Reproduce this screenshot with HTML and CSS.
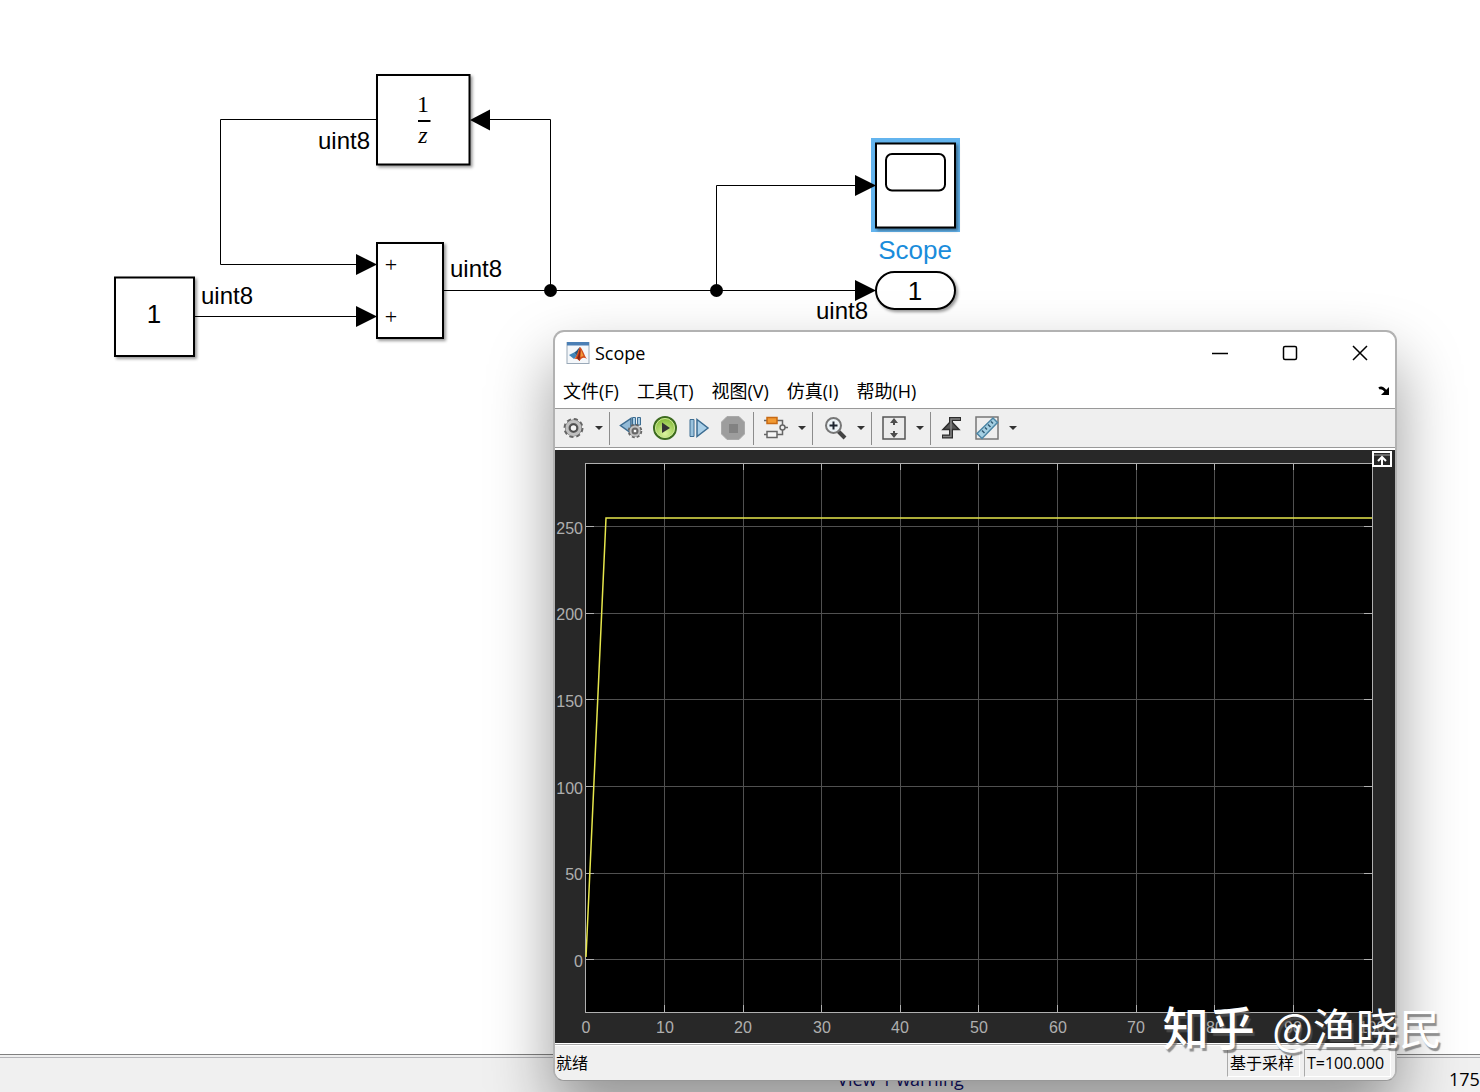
FILE: index.html
```html
<!DOCTYPE html>
<html lang="zh-CN">
<head>
    <meta charset="UTF-8">
    <meta name="viewport" content="width=device-width, initial-scale=1.0">
    <title>Scope</title>
    <link rel="stylesheet" href="styles.css">
</head>
<body>
    <main class="canvas">
        <svg class="diagram" width="1000" height="380" viewBox="0 0 1000 380">
            <defs>
                <filter id="blockShadow" x="-10%" y="-10%" width="130%" height="130%">
                    <feDropShadow dx="2" dy="2" stdDeviation="1.5" flood-color="#000" flood-opacity="0.4"/>
                </filter>
            </defs>

            <!-- signal lines -->
            <g class="wire">
                <path d="M376 119.500H220.500V264.500H358"/>
                <path d="M194 316.500H358"/>
                <path d="M444 290.500H858"/>
                <path d="M550.500 290V119.500H488"/>
                <path d="M716.500 290V185.500H858"/>
            </g>

            <!-- blocks -->
            <g class="block" filter="url(#blockShadow)">
                <rect x="115" y="277.500" width="79" height="78.500"/>
                <rect x="377" y="75" width="92.500" height="89.500"/>
                <rect x="377" y="243" width="66" height="95"/>
                <rect x="876" y="272" width="79" height="37" rx="18.500"/>
            </g>
            <rect class="selection" x="871" y="138" width="89" height="94"/>
            <rect class="block" x="876" y="143.500" width="79" height="84" filter="url(#blockShadow)"/>
            <rect class="block" x="886" y="154" width="59" height="36.500" rx="6"/>

            <g class="arrow">
                <path d="M356 254V275L377 264.500z"/>
                <path d="M356 306V327L377 316.500z"/>
                <path d="M490 109.500V130.500L470 120z"/>
                <path d="M855 175V196L876 185.500z"/>
                <path d="M855 280V301L876 290.500z"/>
                <circle cx="550.500" cy="290.500" r="6.500"/>
                <circle cx="716.500" cy="290.500" r="6.500"/>
            </g>

            <g class="type">
                <text x="318" y="149">uint8</text>
                <text x="201" y="304">uint8</text>
                <text x="450" y="277">uint8</text>
                <text x="816" y="319">uint8</text>
            </g>
            <g class="value">
                <text x="154" y="323">1</text>
                <text x="915" y="300">1</text>
            </g>
            <g class="math">
                <text x="423" y="112">1</text>
                <path d="M418 121H430.500"/>
                <text x="423" y="143" class="italic">z</text>
                <text x="391" y="272" class="port">+</text>
                <text x="391" y="324" class="port">+</text>
            </g>
            <text class="block-name" x="915" y="259">Scope</text>
        </svg>
    </main>

    <footer class="editor-status">
        <a class="warning" href="#">View 1 warning</a>
        <span class="zoom-level">175</span>
    </footer>

    <section class="window">
        <header class="titlebar">
            <svg class="logo" viewBox="0 0 24 24">
                <rect x="1" y="1.500" width="22" height="21" fill="#f4f7fa" stroke="#9aa9b8"/>
                <path d="M1 1H23V4.500H1z" fill="#4b7fb5"/>
                <path d="M3 14L8 11.500L11 14.500L8 18z" fill="#3f84b8"/>
                <path d="M8 11.500C11 10.500 12.500 6.500 14 6L11 14.500z" fill="#285a84"/>
                <path d="M14 6C16.500 7.500 18 14 21 18C18 16 16 16 13.500 20C12 18.500 10.500 17.500 8 18C11 16 12 9 14 6z" fill="#d4501e"/>
                <path d="M14 7C15 11 14 16 13.500 20L11 17C13 14 13 10 14 7z" fill="#8a2415"/>
                <path d="M15 9L17.500 15L14.500 16z" fill="#f49a3a"/>
            </svg>
            <h1>Scope</h1>
            <div class="caption-buttons">
                <button type="button" aria-label="Minimize"><svg viewBox="0 0 16 16"><path d="M0 8.500H16"/></svg></button>
                <button type="button" aria-label="Maximize"><svg viewBox="0 0 16 16"><rect x="1.500" y="1.500" width="13" height="13" rx="1.500"/></svg></button>
                <button type="button" aria-label="Close"><svg viewBox="0 0 16 16"><path d="M1 1L15 15M15 1L1 15"/></svg></button>
            </div>
        </header>

        <nav class="menubar">
            <button type="button">文件(F)</button>
            <button type="button">工具(T)</button>
            <button type="button">视图(V)</button>
            <button type="button">仿真(I)</button>
            <button type="button">帮助(H)</button>
            <button type="button" class="dock" aria-label="Dock">
                <svg viewBox="0 0 12 10"><path d="M1 2.500C4 0.500 6 3 8 5.500" fill="none" stroke="#000" stroke-width="2.500"/><path d="M11 1V9H3z"/></svg>
            </button>
        </nav>

        <div class="toolbar">
            <div class="group">
                <button type="button" aria-label="Configuration">
                    <svg viewBox="0 0 24 24">
                        <circle cx="12.500" cy="12" r="8.500" fill="none" stroke="#666" stroke-width="3" stroke-dasharray="3.900 2.780"/>
                        <circle cx="12.500" cy="12" r="6" fill="none" stroke="#666" stroke-width="5"/>
                        <circle cx="12.500" cy="12" r="6.500" fill="none" stroke="#c0c0c0" stroke-width="3"/>
                        <circle cx="12.500" cy="12" r="3.500" fill="#f4f4f4" stroke="#4a4a4a" stroke-width="1.500"/>
                    </svg>
                </button>
                <button type="button" class="drop" aria-label="Configuration options"></button>
            </div>
            <div class="group">
                <button type="button" aria-label="Step back options">
                    <svg viewBox="0 0 24 24">
                        <path d="M12 2.500V17L1.500 9.500z" fill="#93bad6" stroke="#3d6d92" stroke-width="1.500"/>
                        <path d="M13.500 1.500H16.500V9H13.500zM18.500 1.500H21.500V9H18.500z" fill="#a9cde5" stroke="#3d6d92"/>
                        <circle cx="16" cy="15" r="6" fill="none" stroke="#666" stroke-width="2.500" stroke-dasharray="2.800 1.910"/>
                        <circle cx="16" cy="15" r="4" fill="#eee" stroke="#666" stroke-width="3.500"/>
                        <circle cx="16" cy="15" r="4.500" fill="none" stroke="#c0c0c0" stroke-width="2"/>
                        <circle cx="16" cy="15" r="2" fill="#fff" stroke="#4a4a4a"/>
                    </svg>
                </button>
                <button type="button" aria-label="Run">
                    <svg viewBox="0 0 24 24">
                        <defs>
                            <radialGradient id="runFill" cx="50%" cy="75%" r="70%">
                                <stop offset="0" stop-color="#dcf5a0"/>
                                <stop offset="1" stop-color="#82ba35"/>
                            </radialGradient>
                        </defs>
                        <circle cx="12" cy="12" r="11" fill="url(#runFill)" stroke="#3d6b20" stroke-width="2"/>
                        <circle cx="12" cy="12" r="9.500" fill="none" stroke="#cde997" stroke-width="1"/>
                        <path d="M9 6.500V17L17 12z" fill="#333"/>
                    </svg>
                </button>
                <button type="button" aria-label="Step forward">
                    <svg viewBox="0 0 24 24">
                        <path d="M3 3.500H7V20.500H3z" fill="#9ac2dc" stroke="#3d6d92"/>
                        <path d="M10 3.500V20.500L21 12z" fill="#a9cfe8" stroke="#3d6d92" stroke-width="1.500"/>
                    </svg>
                </button>
                <button type="button" aria-label="Stop">
                    <svg viewBox="0 0 24 24">
                        <path d="M6 0.500H18L23.500 6V18L18 23.500H6L0.500 18V6z" fill="#9d9d9d" stroke="#aaa"/>
                        <rect x="8" y="8" width="9" height="9" fill="#828282"/>
                    </svg>
                </button>
            </div>
            <div class="group">
                <button type="button" aria-label="Highlight block">
                    <svg viewBox="0 0 24 24">
                        <path d="M0 4.500H3M13 4.500H18.500V9M0 18.500H3M13 18.500H18.500V14M21 11.500H24" fill="none" stroke="#666" stroke-width="1.500"/>
                        <rect x="3" y="1.500" width="10" height="6" fill="#f29a32" stroke="#c76a14" stroke-width="1.500"/>
                        <rect x="3" y="15.500" width="10" height="6" fill="#f7f7f7" stroke="#666" stroke-width="1.500"/>
                        <circle cx="18.500" cy="11.500" r="2.500" fill="#eee" stroke="#666" stroke-width="1.500"/>
                    </svg>
                </button>
                <button type="button" class="drop" aria-label="Highlight options"></button>
            </div>
            <div class="group">
                <button type="button" aria-label="Zoom in">
                    <svg viewBox="0 0 24 24">
                        <path d="M15 15L22 22" stroke="#444" stroke-width="4"/>
                        <circle cx="10.500" cy="9.500" r="7.500" fill="#edf3f7" stroke="#777" stroke-width="2"/>
                        <path d="M6.500 9.500H14.500M10.500 5.500V13.500" stroke="#1c2430" stroke-width="2"/>
                    </svg>
                </button>
                <button type="button" class="drop" aria-label="Zoom options"></button>
            </div>
            <div class="group">
                <button type="button" aria-label="Scale axes">
                    <svg viewBox="0 0 24 24">
                        <rect x="1" y="1" width="22" height="22" fill="#ebebeb" stroke="#555" stroke-width="1.500"/>
                        <path d="M12 2L16 7H8zM12 22L16 17H8z" fill="#4c4c4c"/>
                        <path d="M12 6V9M12 15V18" stroke="#4c4c4c" stroke-width="2"/>
                    </svg>
                </button>
                <button type="button" class="drop" aria-label="Scale options"></button>
            </div>
            <div class="group">
                <button type="button" aria-label="Triggers">
                    <svg viewBox="0 0 24 24">
                        <path d="M1 20.500H10V3H20" fill="none" stroke="#2d2d2d" stroke-width="4"/>
                        <path d="M2 13.500L10 5L18 13.500z" fill="#555" stroke="#2d2d2d" stroke-width="1.500"/>
                        <path d="M2 20.500H10V3H19" fill="none" stroke="#858585" stroke-width="1.500"/>
                    </svg>
                </button>
                <button type="button" aria-label="Cursor measurements">
                    <svg viewBox="0 0 24 24">
                        <rect x="1" y="1" width="22" height="22" fill="#eee" stroke="#777" stroke-width="1.500"/>
                        <path d="M2 17.500L18 2L22.500 6.500L7 22.500z" fill="#a5cfe2" stroke="#4c86a5" stroke-width="1.500"/>
                        <path d="M7 14.500L9.500 17M10 11.500L12 13.500M13 8.500L15.500 11M16 5.500L18 7.500" stroke="#315b74" stroke-width="1.500"/>
                    </svg>
                </button>
                <button type="button" class="drop" aria-label="Measurement options"></button>
            </div>
        </div>

        <div class="plot">
            <svg viewBox="0 0 840 593" preserveAspectRatio="none">
                <rect x="30" y="13" width="788" height="550" fill="#000"/>
                <g class="grid">
                    <path d="M109.500 13V562M188.500 13V562M266.500 13V562M345.500 13V562M423.500 13V562M502.500 13V562M581.500 13V562M659.500 13V562M738.500 13V562"/>
                    <path d="M31 76.500H817M31 163.500H817M31 249.500H817M31 336.500H817M31 423.500H817M31 509.500H817"/>
                </g>
                <g class="axis">
                    <rect x="30.500" y="13.500" width="787" height="549"/>
                    <path d="M109.500 13v7m0 535v7M188.500 13v7m0 535v7M266.500 13v7m0 535v7M345.500 13v7m0 535v7M423.500 13v7m0 535v7M502.500 13v7m0 535v7M581.500 13v7m0 535v7M659.500 13v7m0 535v7M738.500 13v7m0 535v7"/>
                    <path d="M31 76.500h8m770 0h8M31 163.500h8m770 0h8M31 249.500h8m770 0h8M31 336.500h8m770 0h8M31 423.500h8m770 0h8M31 509.500h8m770 0h8"/>
                </g>
                <path class="signal" d="M31 507L51 68H817"/>
                <g class="y-labels">
                    <text x="28" y="84">250</text>
                    <text x="28" y="170">200</text>
                    <text x="28" y="257">150</text>
                    <text x="28" y="344">100</text>
                    <text x="28" y="430">50</text>
                    <text x="28" y="517">0</text>
                </g>
                <g class="x-labels">
                    <text x="31" y="583">0</text>
                    <text x="110" y="583">10</text>
                    <text x="188" y="583">20</text>
                    <text x="267" y="583">30</text>
                    <text x="345" y="583">40</text>
                    <text x="424" y="583">50</text>
                    <text x="503" y="583">60</text>
                    <text x="581" y="583">70</text>
                    <text x="660" y="583">80</text>
                    <text x="738" y="583">90</text>
                    <text x="817" y="583">100</text>
                </g>
            </svg>
            <button type="button" class="expand" aria-label="Maximize axes">
                <svg viewBox="0 0 20 16"><rect x="1" y="1" width="18" height="14" fill="#282828" stroke="#fff" stroke-width="2"/><path d="M2 4H18" stroke="#aaa"/><path d="M10 14V7M6 10L10 6L14 10" fill="none" stroke="#fff" stroke-width="2"/></svg>
            </button>
        </div>

        <footer class="statusbar">
            <span class="ready">就绪</span>
            <span class="cell">基于采样</span>
            <span class="cell time">T=100.000</span>
        </footer>
    </section>

    <div class="watermark"><b>知乎</b> @渔晓民</div>
</body>
</html>
```
FILE: styles.css
```css
* {
    box-sizing: border-box;
}

body {
    margin: 0;
    height: 100vh;
    display: flex;
    flex-direction: column;
    position: relative;
    overflow: hidden;
    background: #fff;
    color: #000;
    font-family: "Open Sans", "Noto Sans CJK SC", sans-serif;
}

button {
    padding: 0;
    border: none;
    background: none;
    color: inherit;
    font: inherit;
}

/* model canvas */
.canvas {
    flex: 1;
    min-height: 0;
}

.diagram {
    display: block;
    font-family: "Liberation Sans", Arial, sans-serif;
}

.wire {
    fill: none;
    stroke: #000;
    stroke-width: 1px;
}

.block {
    fill: #fff;
    stroke: #000;
    stroke-width: 2px;
}

.selection {
    fill: #63b4ee;
}

.type {
    font-size: 24px;
}

.value {
    font-size: 26px;
    text-anchor: middle;
}

.math {
    font-family: "Liberation Serif", serif;
    font-size: 24px;
    text-anchor: middle;
    stroke: none;
}

.math path {
    stroke: #000;
    stroke-width: 2px;
}

.italic {
    font-style: italic;
}

.port {
    font-size: 22px;
}

.block-name {
    font-size: 26px;
    text-anchor: middle;
    fill: #1a8cdb;
}

.editor-status {
    height: 38px;
    display: flex;
    border-top: 1px solid #808080;
    background: linear-gradient(#f0f0f0 2px, #b4b4b8 2px, #b4b4b8 3px, #f0f0f0 3px);
    font-size: 18px;
    line-height: 24px;
    padding-top: 12px;
    white-space: nowrap;
}

.warning {
    flex: 1;
    padding-left: 352px;
    text-align: center;
    color: #10106e;
    text-decoration: none;
}

.zoom-level {
    width: 31px;
}

/* scope window */
.window {
    position: absolute;
    top: 330px;
    right: 83px;
    bottom: 11px;
    left: 553px;
    display: flex;
    flex-direction: column;
    overflow: hidden;
    border: 2px solid #b2b2b2;
    border-bottom: 1px solid #999;
    border-radius: 11px;
    background: #fff;
    box-shadow: 0 32px 64px rgba(0, 0, 0, 0.4);
}

.titlebar {
    height: 42px;
    display: flex;
    align-items: center;
    padding-left: 11px;
}

.logo {
    width: 24px;
    height: 24px;
}

.titlebar h1 {
    flex: 1;
    margin: 0 0 0 5px;
    font-size: 18px;
    font-weight: normal;
    line-height: 24px;
}

.caption-buttons {
    display: flex;
}

.caption-buttons button {
    width: 70px;
    height: 42px;
}

.caption-buttons svg {
    display: block;
    margin: 0 auto;
    width: 16px;
    height: 16px;
    fill: none;
    stroke: #000;
    stroke-width: 1.500px;
}

.menubar {
    height: 34px;
    display: flex;
    align-items: center;
    gap: 18px;
    padding: 0 5px 0 8px;
    font-size: 18px;
    line-height: 24px;
}

.dock {
    margin-left: auto;
}

.dock svg {
    width: 12px;
    height: 10px;
    display: block;
}

.toolbar {
    height: 40px;
    display: flex;
    align-items: center;
    border-top: 1px solid #999;
    border-bottom: 1px solid #999;
    background: #efefef;
    margin-bottom: 2px;
}

.group {
    height: 33px;
    display: flex;
    align-items: center;
    gap: 10px;
    padding: 0 4px 0 10px;
    border-right: 1px solid #8c8c8c;
}

.group:first-child {
    padding-left: 6px;
}

.group:nth-child(2) {
    padding: 0 8px 0 9px;
}

.group:last-child {
    border: none;
}

.group button {
    height: 24px;
    width: 24px;
}

.group svg {
    display: block;
    width: 24px;
    height: 24px;
}

.group .drop {
    width: 12px;
    margin-left: -2px;
}

.drop::after {
    content: "";
    display: block;
    margin: 0 auto;
    width: 0;
    border: 4px solid transparent;
    border-top-color: #333;
    border-bottom: none;
}

.plot {
    flex: 1;
    min-height: 0;
    position: relative;
    background: #282828;
}

.plot > svg {
    display: block;
    width: 100%;
    height: 100%;
    font-family: "Liberation Sans", Arial, sans-serif;
    font-size: 16px;
}

.grid {
    fill: none;
    stroke: #505050;
}

.axis {
    fill: none;
    stroke: #b0b0b0;
}

.signal {
    fill: none;
    stroke: #e6e64c;
    stroke-width: 1.500px;
}

.x-labels,
.y-labels {
    fill: #afafaf;
}

.x-labels {
    text-anchor: middle;
}

.y-labels {
    text-anchor: end;
}

.expand {
    position: absolute;
    top: 1px;
    right: 3px;
}

.expand svg {
    display: block;
    width: 20px;
    height: 16px;
}

.statusbar {
    height: 37px;
    display: flex;
    align-items: center;
    gap: 4px;
    padding: 2px 4px 0 1px;
    border-top: 1px solid #fff;
    background: linear-gradient(#aaa 1px, #fff 1px, #fff 2px, #f0f0f0 2px);
    font-size: 16px;
    line-height: 26px;
}

.ready {
    flex: 1;
}

.cell {
    width: 73px;
    padding-left: 2px;
    border: 1px solid #fff;
    border-top-color: #aaa;
    border-left-color: #aaa;
}

.time {
    width: 87px;
}

/* author mark over the lower right corner */
.watermark {
    position: absolute;
    right: 38px;
    bottom: 34px;
    color: #fff;
    font-family: "Noto Sans CJK SC", sans-serif;
    font-size: 43px;
    line-height: 64px;
    text-shadow: 2px 3px 1px rgba(90, 90, 90, 0.65);
    white-space: nowrap;
}

.watermark b {
    margin-right: 8px;
    font-size: 46px;
    font-weight: 500;
}
```
